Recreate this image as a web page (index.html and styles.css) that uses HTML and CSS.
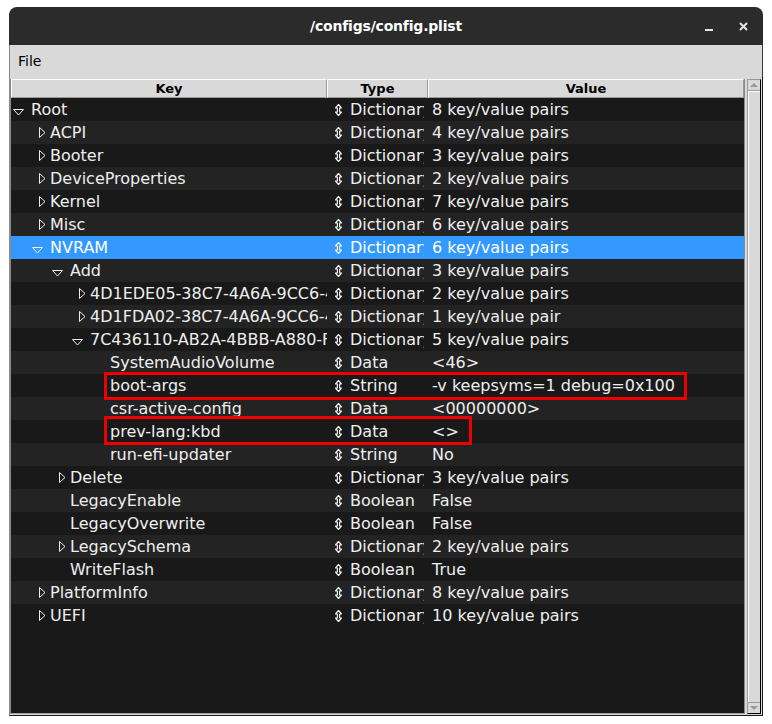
FILE: index.html
```html
<!DOCTYPE html>
<html>
<head>
<meta charset="utf-8">
<title>/configs/config.plist</title>
<link rel="stylesheet" href="styles.css">
</head>
<body>
<svg class="defs" width="0" height="0" aria-hidden="true">
  <symbol id="tri-open" viewBox="0 0 11 7"><polygon points="0.5,0.5 10.5,0.5 5.5,6" fill="none" stroke="#eeeeee" stroke-width="1"/></symbol>
  <symbol id="tri-closed" viewBox="0 0 7 11"><polygon points="0.5,0.5 6,5.5 0.5,10.5" fill="none" stroke="#eeeeee" stroke-width="1"/></symbol>
  <symbol id="updown" viewBox="0 0 7 12"><path d="M3.5 0.5 L6.5 4 L4.6 4 L4.6 8 L6.5 8 L3.5 11.5 L0.5 8 L2.4 8 L2.4 4 L0.5 4 Z" fill="none" stroke="#eeeeee" stroke-width="1.2" stroke-linejoin="round"/></symbol>
</svg>
<div class="window">
  <div class="titlebar">
    <span></span>
    <span class="title">/configs/config.plist</span>
    <div class="controls">
      <span class="minimize"></span>
      <svg class="close" width="9" height="9" viewBox="0 0 9 9"><path d="M1 1 L8 8 M8 1 L1 8" stroke="#e6e6e6" stroke-width="2"/></svg>
    </div>
  </div>
  <div class="menubar"><span class="menu-item">File</span></div>
  <div class="content">
    <div class="tree">
      <div class="header">
        <div class="hcell key">Key</div>
        <div class="hcell htype">Type</div>
        <div class="hcell value">Value</div>
      </div>
      <div class="rows">
        <div class="row"><div class="cell key l0"><span class="twisty open"><svg><use href="#tri-open"/></svg></span><span class="label">Root</span></div><div class="cell type"><svg class="ud"><use href="#updown"/></svg><span>Dictionary</span></div><div class="cell value">8 key/value pairs</div></div>
        <div class="row"><div class="cell key l1"><span class="twisty closed"><svg><use href="#tri-closed"/></svg></span><span class="label">ACPI</span></div><div class="cell type"><svg class="ud"><use href="#updown"/></svg><span>Dictionary</span></div><div class="cell value">4 key/value pairs</div></div>
        <div class="row"><div class="cell key l1"><span class="twisty closed"><svg><use href="#tri-closed"/></svg></span><span class="label">Booter</span></div><div class="cell type"><svg class="ud"><use href="#updown"/></svg><span>Dictionary</span></div><div class="cell value">3 key/value pairs</div></div>
        <div class="row"><div class="cell key l1"><span class="twisty closed"><svg><use href="#tri-closed"/></svg></span><span class="label">DeviceProperties</span></div><div class="cell type"><svg class="ud"><use href="#updown"/></svg><span>Dictionary</span></div><div class="cell value">2 key/value pairs</div></div>
        <div class="row"><div class="cell key l1"><span class="twisty closed"><svg><use href="#tri-closed"/></svg></span><span class="label">Kernel</span></div><div class="cell type"><svg class="ud"><use href="#updown"/></svg><span>Dictionary</span></div><div class="cell value">7 key/value pairs</div></div>
        <div class="row"><div class="cell key l1"><span class="twisty closed"><svg><use href="#tri-closed"/></svg></span><span class="label">Misc</span></div><div class="cell type"><svg class="ud"><use href="#updown"/></svg><span>Dictionary</span></div><div class="cell value">6 key/value pairs</div></div>
        <div class="row selected"><div class="cell key l1"><span class="twisty open"><svg><use href="#tri-open"/></svg></span><span class="label">NVRAM</span></div><div class="cell type"><svg class="ud"><use href="#updown"/></svg><span>Dictionary</span></div><div class="cell value">6 key/value pairs</div></div>
        <div class="row"><div class="cell key l2"><span class="twisty open"><svg><use href="#tri-open"/></svg></span><span class="label">Add</span></div><div class="cell type"><svg class="ud"><use href="#updown"/></svg><span>Dictionary</span></div><div class="cell value">3 key/value pairs</div></div>
        <div class="row"><div class="cell key l3"><span class="twisty closed"><svg><use href="#tri-closed"/></svg></span><span class="label">4D1EDE05-38C7-4A6A-9CC6-4BCCA8B38C14</span></div><div class="cell type"><svg class="ud"><use href="#updown"/></svg><span>Dictionary</span></div><div class="cell value">2 key/value pairs</div></div>
        <div class="row"><div class="cell key l3"><span class="twisty closed"><svg><use href="#tri-closed"/></svg></span><span class="label">4D1FDA02-38C7-4A6A-9CC6-4BCCA8B30102</span></div><div class="cell type"><svg class="ud"><use href="#updown"/></svg><span>Dictionary</span></div><div class="cell value">1 key/value pair</div></div>
        <div class="row"><div class="cell key l3"><span class="twisty open"><svg><use href="#tri-open"/></svg></span><span class="label">7C436110-AB2A-4BBB-A880-FE41995C9F82</span></div><div class="cell type"><svg class="ud"><use href="#updown"/></svg><span>Dictionary</span></div><div class="cell value">5 key/value pairs</div></div>
        <div class="row"><div class="cell key l4"><span class="twisty"></span><span class="label">SystemAudioVolume</span></div><div class="cell type"><svg class="ud"><use href="#updown"/></svg><span>Data</span></div><div class="cell value">&lt;46&gt;</div></div>
        <div class="row marked"><div class="cell key l4"><span class="twisty"></span><span class="label">boot-args</span></div><div class="cell type"><svg class="ud"><use href="#updown"/></svg><span>String</span></div><div class="cell value">-v keepsyms=1 debug=0x100</div><span class="mark mark-boot"></span></div>
        <div class="row"><div class="cell key l4"><span class="twisty"></span><span class="label">csr-active-config</span></div><div class="cell type"><svg class="ud"><use href="#updown"/></svg><span>Data</span></div><div class="cell value">&lt;00000000&gt;</div></div>
        <div class="row marked"><div class="cell key l4"><span class="twisty"></span><span class="label">prev-lang:kbd</span></div><div class="cell type"><svg class="ud"><use href="#updown"/></svg><span>Data</span></div><div class="cell value">&lt;&gt;</div><span class="mark mark-lang"></span></div>
        <div class="row"><div class="cell key l4"><span class="twisty"></span><span class="label">run-efi-updater</span></div><div class="cell type"><svg class="ud"><use href="#updown"/></svg><span>String</span></div><div class="cell value">No</div></div>
        <div class="row"><div class="cell key l2"><span class="twisty closed"><svg><use href="#tri-closed"/></svg></span><span class="label">Delete</span></div><div class="cell type"><svg class="ud"><use href="#updown"/></svg><span>Dictionary</span></div><div class="cell value">3 key/value pairs</div></div>
        <div class="row"><div class="cell key l2"><span class="twisty"></span><span class="label">LegacyEnable</span></div><div class="cell type"><svg class="ud"><use href="#updown"/></svg><span>Boolean</span></div><div class="cell value">False</div></div>
        <div class="row"><div class="cell key l2"><span class="twisty"></span><span class="label">LegacyOverwrite</span></div><div class="cell type"><svg class="ud"><use href="#updown"/></svg><span>Boolean</span></div><div class="cell value">False</div></div>
        <div class="row"><div class="cell key l2"><span class="twisty closed"><svg><use href="#tri-closed"/></svg></span><span class="label">LegacySchema</span></div><div class="cell type"><svg class="ud"><use href="#updown"/></svg><span>Dictionary</span></div><div class="cell value">2 key/value pairs</div></div>
        <div class="row"><div class="cell key l2"><span class="twisty"></span><span class="label">WriteFlash</span></div><div class="cell type"><svg class="ud"><use href="#updown"/></svg><span>Boolean</span></div><div class="cell value">True</div></div>
        <div class="row"><div class="cell key l1"><span class="twisty closed"><svg><use href="#tri-closed"/></svg></span><span class="label">PlatformInfo</span></div><div class="cell type"><svg class="ud"><use href="#updown"/></svg><span>Dictionary</span></div><div class="cell value">8 key/value pairs</div></div>
        <div class="row"><div class="cell key l1"><span class="twisty closed"><svg><use href="#tri-closed"/></svg></span><span class="label">UEFI</span></div><div class="cell type"><svg class="ud"><use href="#updown"/></svg><span>Dictionary</span></div><div class="cell value">10 key/value pairs</div></div>
      </div>
    </div>
    <div class="scrollbar">
      <div class="sb-btn up"><span class="arrow-up"></span></div>
      <div class="sb-thumb"></div>
      <div class="sb-btn down"><span class="arrow-down"></span></div>
    </div>
  </div>
</div>
</body>
</html>
```
FILE: styles.css
```css
* { box-sizing: border-box; }

body {
  margin: 0;
  background: #ffffff;
  font-family: "DejaVu Sans", "Noto Sans", sans-serif;
}

.defs { position: absolute; width: 0; height: 0; overflow: hidden; }

.window {
  width: 754px;
  height: 709px;
  margin: 7px 0 0 9px;
  display: flex;
  flex-direction: column;
}

.titlebar {
  height: 38px;
  flex: none;
  background: #2b2b2b;
  border-radius: 8px 8px 0 0;
  display: grid;
  grid-template-columns: 1fr auto 1fr;
  align-items: center;
  color: #ffffff;
}

.title {
  font-weight: bold;
  font-size: 14px;
  letter-spacing: -0.2px;
}

.controls {
  justify-self: end;
  display: flex;
  align-items: center;
  gap: 26px;
  padding-right: 15px;
}

.minimize {
  display: block;
  width: 8px;
  height: 2px;
  background: #e6e6e6;
  margin-top: 8px;
}

.close { display: block; margin-top: 1px; }

.menubar {
  height: 32px;
  flex: none;
  background: #d9d9d9;
  border-left: 1px solid #8a8a8a;
  border-right: 1px solid #3a3a3a;
  display: flex;
  align-items: center;
  padding-left: 8px;
}

.menu-item {
  font-size: 14px;
  color: #000000;
}

.content {
  flex: 1;
  display: flex;
  gap: 2px;
  background: #d9d9d9;
  padding: 2px 1px 1px 0;
  border-left: 1px solid #8a8a8a;
  border-right: 1px solid #1a1a1a;
  border-bottom: 1px solid #1a1a1a;
}

.tree {
  width: 736px;
  display: flex;
  flex-direction: column;
  border-left: 1px solid #8a8a8a;
  border-right: 1px solid #8a8a8a;
  border-bottom: 1px solid #a0a0a0;
}

.header {
  height: 19px;
  flex: none;
  display: flex;
  background: #d9d9d9;
}

.hcell {
  font-size: 13px;
  font-weight: bold;
  color: #000000;
  text-align: center;
  line-height: 17px;
  border-top: 1px solid #ffffff;
  border-left: 1px solid #ffffff;
  border-right: 1px solid #9a9a9a;
  border-bottom: 1px solid #9a9a9a;
}

.key { width: 316px; flex: none; }
.htype { width: 101px; flex: none; }
.type { width: 97px; flex: none; }
.value { flex: 1; min-width: 0; }

.rows {
  flex: 1;
  background: #191919;
}

.row {
  height: 23px;
  display: flex;
  color: #eeeeee;
  font-size: 16px;
  line-height: 23px;
  white-space: nowrap;
}

.row:nth-child(odd) { background: #191919; }
.row:nth-child(even) { background: #232323; }
.row.selected { background: #3399ff; color: #ffffff; }

.cell {
  overflow: hidden;
  display: flex;
}

.cell.key.l0 { padding-left: 1px; }
.cell.key.l1 { padding-left: 20px; }
.cell.key.l2 { padding-left: 40px; }
.cell.key.l3 { padding-left: 60px; }
.cell.key.l4 { padding-left: 80px; }

.twisty {
  width: 19px;
  flex: none;
  position: relative;
}

.twisty svg { display: block; }

.twisty.open svg {
  width: 11px;
  height: 7px;
  margin: 11px 0 0 1px;
}

.twisty.closed svg {
  width: 7px;
  height: 11px;
  margin: 6px 0 0 8px;
}

.label { flex: none; }

.cell.type {
  padding-left: 8px;
  align-items: center;
}

.cell.type span { flex: none; margin-left: 8px; }

.ud {
  width: 7px;
  height: 12px;
  flex: none;
  display: block;
}

.cell.value { padding-left: 8px; }

.row.marked { position: relative; }

.mark {
  position: absolute;
  z-index: 2;
  left: 93px;
  border: 3px solid #ee0000;
}

.mark-boot { top: -2px; width: 583px; height: 28px; }
.mark-lang { top: -4px; width: 368px; height: 29px; }

.scrollbar {
  width: 14px;
  display: flex;
  flex-direction: column;
  border: 1px solid #9a9a9a;
  border-right-color: #000000;
  border-bottom-color: #000000;
  background: #d9d9d9;
}

.sb-btn {
  height: 11px;
  flex: none;
  display: flex;
  align-items: center;
  justify-content: center;
  border-bottom: 1px solid #9a9a9a;
}

.sb-btn.down {
  border-bottom: none;
  border-top: 1px solid #9a9a9a;
}

.sb-thumb {
  flex: 1;
  border-left: 1px solid #ffffff;
  border-top: 1px solid #ffffff;
}

.arrow-up {
  width: 0;
  height: 0;
  border-left: 4px solid transparent;
  border-right: 4px solid transparent;
  border-bottom: 4px solid #9a9a9a;
}

.arrow-down {
  width: 0;
  height: 0;
  border-left: 4px solid transparent;
  border-right: 4px solid transparent;
  border-top: 4px solid #9a9a9a;
}
```
